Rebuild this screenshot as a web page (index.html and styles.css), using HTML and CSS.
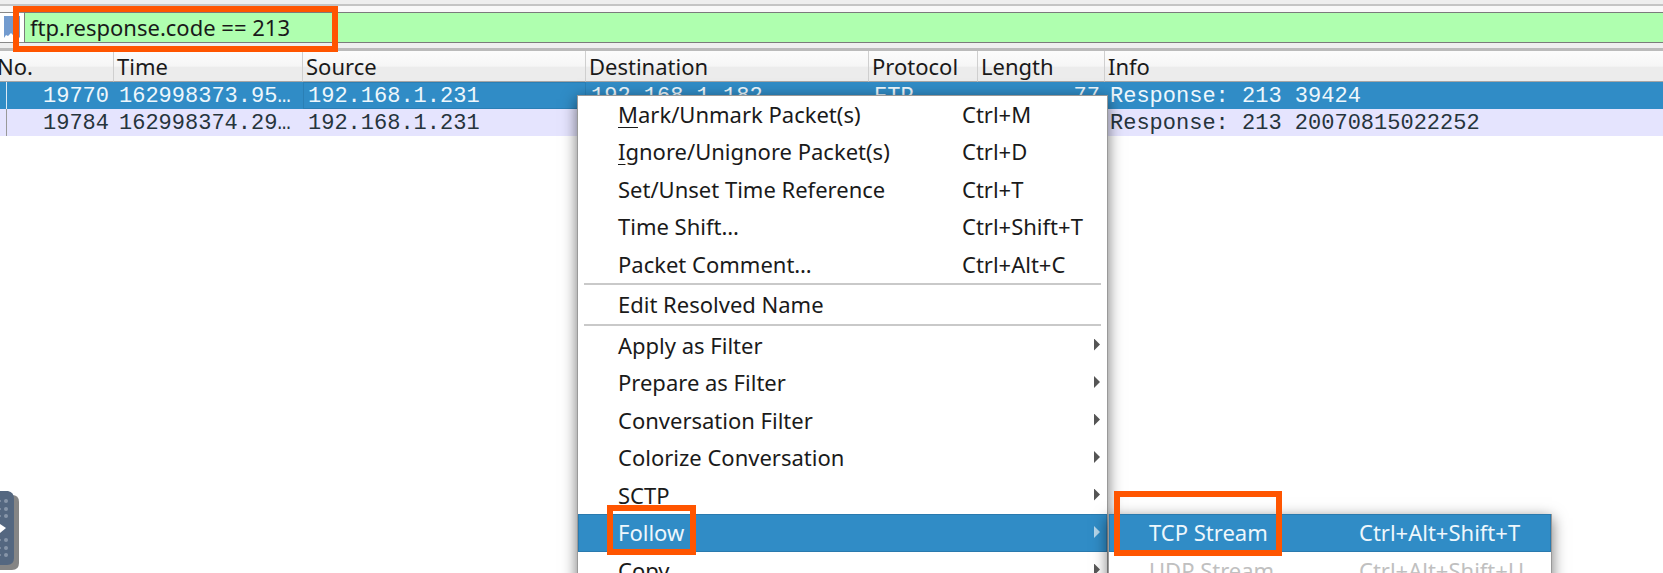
FILE: index.html
```
<!DOCTYPE html>
<html lang="en">
<head>
<meta charset="utf-8">
<title>Packet list</title>
<link rel="stylesheet" href="styles.css">
</head>
<body>
<div class="toolbar-edge"></div>
<form class="filter-bar">
  <button class="bookmark" type="button" aria-label="Filter bookmarks">
    <svg width="16" height="22" viewBox="0 0 16 22"><path d="M0 0H16V22L12 18L10 20L7 17L4 20L2 19L0 22Z" fill="#729bcf"/></svg>
  </button>
  <input class="filter-input" type="text" aria-label="Display filter" value="ftp.response.code == 213" spellcheck="false">
</form>
<main class="packets">
  <table class="packet-table">
    <colgroup>
      <col class="col-no"><col class="col-time"><col class="col-address"><col class="col-address"><col class="col-protocol"><col class="col-length"><col>
    </colgroup>
    <thead>
      <tr><th class="head-no">No.</th><th>Time</th><th>Source</th><th>Destination</th><th>Protocol</th><th>Length</th><th>Info</th></tr>
    </thead>
    <tbody>
      <tr class="selected"><td class="no">19770</td><td>162998373.95…</td><td class="current">192.168.1.231</td><td>192.168.1.182</td><td>FTP</td><td class="length">77</td><td>Response: 213 39424</td></tr>
      <tr><td class="no">19784</td><td>162998374.29…</td><td>192.168.1.231</td><td></td><td></td><td></td><td>Response: 213 20070815022252</td></tr>
    </tbody>
  </table>
</main>

<ul class="menu context-menu">
  <li><button class="item"><span><u>M</u>ark/Unmark Packet(s)</span><span>Ctrl+M</span></button></li>
  <li><button class="item tall"><span><u>I</u>gnore/Unignore Packet(s)</span><span>Ctrl+D</span></button></li>
  <li><button class="item"><span>Set/Unset Time Reference</span><span>Ctrl+T</span></button></li>
  <li><button class="item tall"><span>Time Shift…</span><span>Ctrl+Shift+T</span></button></li>
  <li><button class="item"><span>Packet Comment…</span><span>Ctrl+Alt+C</span></button></li>
  <li class="separator"></li>
  <li><button class="item tall"><span>Edit Resolved Name</span></button></li>
  <li class="separator"></li>
  <li><button class="item parent"><span>Apply as Filter</span></button></li>
  <li><button class="item tall parent"><span>Prepare as Filter</span></button></li>
  <li><button class="item parent"><span>Conversation Filter</span></button></li>
  <li><button class="item tall parent"><span>Colorize Conversation</span></button></li>
  <li><button class="item parent"><span>SCTP</span></button></li>
  <li class="open">
    <button class="item tall parent active"><span>Follow</span></button>
    <ul class="menu submenu">
      <li><button class="item tall active"><span>TCP Stream</span><span>Ctrl+Alt+Shift+T</span></button></li>
      <li><button class="item" disabled><span>UDP Stream</span><span>Ctrl+Alt+Shift+U</span></button></li>
    </ul>
  </li>
  <li><button class="item parent"><span>Copy</span></button></li>
</ul>

<button class="drawer-handle" aria-label="Open panel">
  <svg width="19" height="80" viewBox="0 0 19 80">
    <path d="M0 4H12Q19 4 19 11V72Q19 79 12 79H0Z" fill="#858585"/>
    <path d="M0 0H8Q14 1 14 8V67Q14 74 7 74H0Z" fill="#546780"/>
    <path d="M0 33L6 37L0 42Z" fill="#fff"/>
    <g fill="#8795a8"><circle cx="6" cy="10" r="2"/><circle cx="6" cy="18" r="2"/><circle cx="6" cy="25" r="2"/><circle cx="6" cy="49" r="2"/><circle cx="6" cy="57" r="2"/><circle cx="6" cy="64" r="2"/><circle cx="0" cy="10" r="1"/><circle cx="0" cy="18" r="1"/><circle cx="0" cy="25" r="1"/><circle cx="0" cy="49" r="1"/><circle cx="0" cy="57" r="1"/><circle cx="0" cy="64" r="1"/></g>
  </svg>
</button>
<div class="highlight highlight-filter"></div>
<div class="highlight highlight-follow"></div>
<div class="highlight highlight-stream"></div>
</body>
</html>
```
FILE: styles.css
```
* { box-sizing: border-box; }
body {
  position: relative;
  display: flex;
  flex-direction: column;
  height: 100vh;
  margin: 0;
  overflow: hidden;
  background: #fff;
  color: #1a1a1a;
  font: 22px/28px "Noto Sans", sans-serif;
}
button { font: inherit; color: inherit; border: 0; padding: 0; background: none; }

.toolbar-edge { flex: none; height: 6px; background: #eee; border-bottom: 2px solid #c4c4c4; }
.filter-bar {
  flex: none;
  display: flex;
  height: 42px;
  padding: 6px 0 5px;
  background: linear-gradient(#f8f8f8 50%, #efefef 50%);
}
.bookmark {
  display: flex;
  width: 24px;
  padding: 3px 0 0 4px;
  background: #fff;
  border: 1px solid #888;
  border-width: 1px 0;
}
.filter-input {
  flex: 1;
  min-width: 0;
  padding: 0 5px 2px;
  border: 1px solid #7b7b7b;
  border-right: 0;
  background: #afffaf;
  color: #1a1a1a;
  font: inherit;
  outline: 0;
}

.packets { flex: 1; border-top: 3px solid #bbb; }
.packet-table { width: 100%; table-layout: fixed; border-collapse: separate; border-spacing: 0; }
.col-no { width: 114px; }
.col-time { width: 189px; }
.col-address { width: 283px; }
.col-protocol { width: 109px; }
.col-length { width: 127px; }
th {
  height: 31px;
  padding: 0 3px 1px;
  background: linear-gradient(#fcfcfc, #f6f6f6 50%, #ececec 55%, #ececec);
  border-right: 1px solid #cfcfcf;
  border-bottom: 1px solid #a5a5a5;
  font-weight: 400;
  text-align: left;
}
th:last-child { border-right: 0; }
.head-no { padding: 0 0 1px; text-indent: -3px; }
td {
  height: 27px;
  padding: 2px 5px 0;
  background: #e5e4fe;
  color: #26343c;
  font: 22px/25px "Liberation Mono", monospace;
  white-space: nowrap;
  overflow: hidden;
}
.no { background: linear-gradient(#999, #999) 6px 0 / 1px 100% no-repeat #e5e4fe; }
.no, .length { text-align: right; }
.selected td { background-color: #308cc6; color: #eef7fc; }
.selected .no { background-image: linear-gradient(#dceaf5, #dceaf5); }
.selected .current { box-shadow: inset 0 0 0 1px #2a7fb5; }

.menu {
  position: absolute;
  margin: 0;
  padding: 0;
  list-style: none;
  background: #fff;
  box-shadow: 0 4px 14px rgba(0, 0, 0, .55);
}
.context-menu { left: 577px; top: 95px; width: 531px; border: 1px solid #999; }
.item {
  display: grid;
  grid-template-columns: 344px 1fr 18px;
  align-items: center;
  width: 100%;
  height: 37px;
  padding: 0 0 2px 40px;
  text-align: left;
  white-space: nowrap;
}
.tall { height: 38px; }
.item u { text-underline-offset: 4px; text-decoration-thickness: 1px; }
.parent::after {
  content: "";
  grid-column: 3;
  width: 6px;
  height: 12px;
  margin-left: 5px;
  background: #555;
  clip-path: polygon(0 0, 100% 50%, 0 100%);
}
.separator { height: 3px; margin: 0 6px; border-bottom: 1px solid #fff; background: #c9c9c9; background-clip: padding-box; }
.active { background: #308cc6; color: #eef7fc; box-shadow: inset 0 0 0 1px #2a7aae; }
.active.parent::after { background: #b5d6ea; }
.open { position: relative; }
.submenu { left: 530px; top: 0; width: 444px; border: 1px solid #999; border-top: 0; }
.submenu .item { grid-template-columns: 210px 1fr; }
.item:disabled { color: #c0c0c0; }

.drawer-handle { position: absolute; left: 0; top: 491px; line-height: 0; }
.highlight { position: absolute; border: 6px solid #ff5500; pointer-events: none; }
.highlight-filter { left: 13px; top: 6px; width: 325px; height: 46px; }
.highlight-follow { left: 607px; top: 505px; width: 89px; height: 50px; }
.highlight-stream { left: 1114px; top: 491px; width: 168px; height: 65px; }
```
